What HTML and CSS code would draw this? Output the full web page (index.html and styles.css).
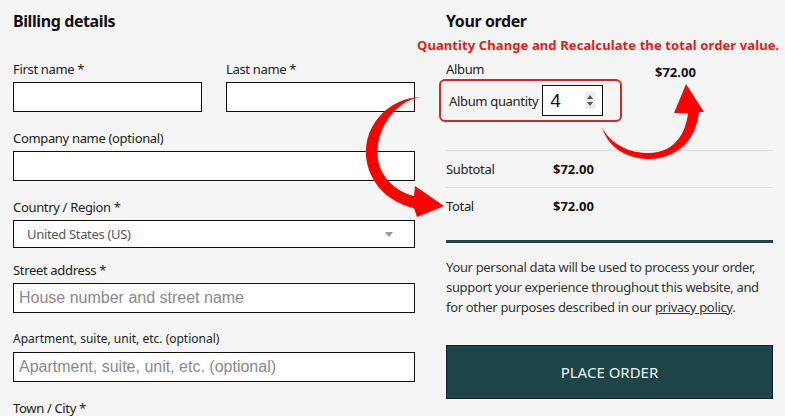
FILE: index.html
```html
<!DOCTYPE html>
<html lang="en">
<head>
    <meta charset="UTF-8" />
    <meta name="viewport" content="width=device-width, initial-scale=1.0" />
    <title>Checkout</title>
    <link rel="stylesheet" href="styles.css">
</head>
<body>

    <div class="checkout">

        <section class="billing">
            <h3 class="section-title">Billing details</h3>

            <div class="field-row">
                <div class="field">
                    <label>First name *</label>
                    <input type="text" class="text-input" />
                </div>
                <div class="field">
                    <label>Last name *</label>
                    <input type="text" class="text-input" />
                </div>
            </div>

            <div class="field">
                <label>Company name (optional)</label>
                <input type="text" class="text-input" />
            </div>

            <div class="field field-select">
                <label>Country / Region *</label>
                <div class="select-box">
                    <span>United States (US)</span>
                    <span class="select-arrow"></span>
                </div>
            </div>

            <div class="field">
                <label>Street address *</label>
                <input type="text" class="text-input" placeholder="House number and street name" />
            </div>

            <div class="field">
                <label class="small-label">Apartment, suite, unit, etc. (optional)</label>
                <input type="text" class="text-input" placeholder="Apartment, suite, unit, etc. (optional)" />
            </div>

            <div class="field">
                <label>Town / City *</label>
            </div>
        </section>

        <section class="order">
            <h3 class="section-title">Your order</h3>
            <p class="note">Quantity Change and Recalculate the total order value.</p>

            <div class="product">
                <div>
                    <div class="product-name">Album</div>
                    <div class="qty-highlight">
                        <span>Album quantity</span>
                        <div class="qty-input">
                            <span>4</span>
                            <svg class="spinner" width="10" height="17" viewBox="0 0 10 17">
                                <rect width="10" height="17" fill="#ebebeb" />
                                <path d="M2 7 L5 3 L8 7 Z" fill="#555" />
                                <path d="M2 10 L5 14 L8 10 Z" fill="#555" />
                            </svg>
                        </div>
                    </div>
                </div>
                <div class="price">$72.00</div>
            </div>

            <div class="totals-row">
                <span>Subtotal</span>
                <span class="price">$72.00</span>
            </div>
            <div class="totals-row">
                <span>Total</span>
                <span class="price">$72.00</span>
            </div>

            <p class="privacy">
                Your personal data will be used to process your order,
                support your experience throughout this website, and
                for other purposes described in our <a href="#">privacy policy</a>.
            </p>

            <button class="place-order">PLACE ORDER</button>
        </section>

        <!-- red annotation arrows drawn over the form -->
        <svg class="arrows" width="785" height="416" viewBox="0 0 785 416">
            <path fill="#f00" d="M 422 97 C 386 97, 360 130, 367 163 C 373 190, 395 204, 414 208 L 417 217 L 444 206 L 415 186 L 414 196 C 398 192, 382 180, 378 160 C 374 130, 395 100, 422 97 Z" />
            <path fill="#f00" d="M 602 127 C 610 155, 640 162, 660 158 C 685 152, 696 135, 699 112 L 704 112 L 686 84 L 674 113 L 688 113 C 686 132, 676 148, 658 152 C 638 156, 612 148, 602 127 Z" />
        </svg>
    </div>

</body>
</html>
```

FILE: styles.css
```css
body {
    background-color: #f5f5f5;
    color: #222;
    margin: 0;
    font-family: "Noto Sans", "Open Sans", sans-serif;
    font-size: 13px;
    letter-spacing: -0.33px;
}

.checkout {
    position: relative;
    display: flex;
    gap: 31px;
    padding: 9px 12px 0 13px;
    height: 416px;
    box-sizing: border-box;
    overflow: hidden;
}

.billing {
    width: 402px;
    flex-shrink: 0;
}

.order {
    width: 327px;
    min-width: 0;
    flex-shrink: 0;
}

.section-title {
    margin: 0;
    font-size: 16px;
    line-height: 24px;
    font-weight: bold;
    color: #111;
    letter-spacing: -0.4px;
}

.billing .section-title {
    margin-bottom: 27px;
}

.field-row {
    display: flex;
    gap: 24px;
}

.field-row .field {
    flex: 1;
}

.field {
    margin-bottom: 17px;
}

.field label {
    display: block;
    line-height: 18px;
    margin-bottom: 4px;
}

.field .small-label {
    font-size: 12px;
    letter-spacing: 0;
}

.text-input {
    display: block;
    width: 100%;
    height: 30px;
    box-sizing: border-box;
    border: 1px solid #111;
    background: #fff;
    padding: 0 5px;
    font-family: "Liberation Sans", Arial, sans-serif;
    font-size: 16px;
    outline: none;
}

.text-input::placeholder {
    color: #8a8a8a;
}

.field-select {
    margin-bottom: 13px;
}

.select-box {
    display: flex;
    align-items: center;
    justify-content: space-between;
    height: 28px;
    box-sizing: border-box;
    border: 1px solid #111;
    background: #fff;
    padding: 0 21px 0 13px;
    color: #555;
}

.select-arrow {
    width: 0;
    height: 0;
    border-left: 4px solid transparent;
    border-right: 4px solid transparent;
    border-top: 5px solid #999;
}

.note {
    margin: 3px 0 0 -29px;
    line-height: 18px;
    font-weight: bold;
    color: #e21c1c;
    white-space: nowrap;
    letter-spacing: 0.1px;
}

.product {
    display: grid;
    grid-template-columns: 209px 1fr;
    margin-top: 6px;
    padding-bottom: 28px;
}

.product-name {
    line-height: 18px;
    margin-bottom: 1px;
}

.price {
    font-weight: bold;
    color: #111;
    letter-spacing: 0;
}

.product .price {
    padding-top: 3px;
    line-height: 18px;
}

.qty-highlight {
    display: flex;
    align-items: center;
    gap: 4px;
    width: 183px;
    box-sizing: border-box;
    margin-left: -7px;
    padding: 4px 8px;
    border: 2px solid #d9252a;
    border-radius: 6px;
}

.qty-input {
    display: flex;
    align-items: center;
    justify-content: space-between;
    width: 61px;
    height: 31px;
    box-sizing: border-box;
    border: 1px solid #111;
    background: #fff;
    padding: 0 7px 0 7px;
    font-family: "Liberation Sans", Arial, sans-serif;
    font-size: 19px;
    letter-spacing: 0;
    color: #111;
}

.totals-row {
    display: grid;
    grid-template-columns: 107px 1fr;
    border-top: 1px solid #ddd;
    padding: 9px 0;
    line-height: 18px;
}

.totals-row:last-of-type {
    padding-bottom: 25px;
    border-bottom: 3px solid #1d4546;
}

.privacy {
    max-width: 316px;
    margin: 14px 0 28px;
    line-height: 20px;
    color: #333;
}

.privacy a {
    color: #333;
}

.place-order {
    display: block;
    width: 100%;
    height: 54px;
    background-color: #1d4547;
    border: 1px solid #0e2324;
    color: #eef3f2;
    font-family: inherit;
    font-size: 15px;
    cursor: pointer;
}

.arrows {
    position: absolute;
    left: 0;
    top: 0;
    pointer-events: none;
}
```
